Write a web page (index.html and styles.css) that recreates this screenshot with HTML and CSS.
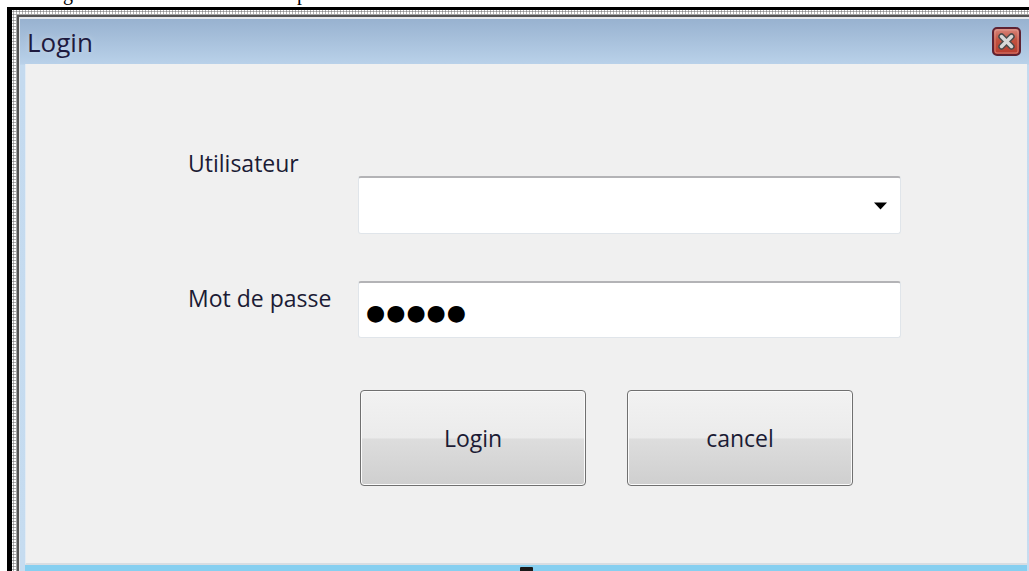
FILE: index.html
```html
<!DOCTYPE html>
<html lang="fr">
<head>
<meta charset="utf-8">
<title>Login</title>
<link rel="stylesheet" href="styles.css">
</head>
<body>
  <div class="caption"><span class="cap-g">g</span><span class="cap-p">p</span></div>
  <div class="frame">
    <div class="dots">
      <div class="win-outer">
        <div class="win-mid">
          <div class="win-edge">
            <div class="window">
              <div class="titlebar">
                <span class="title">Login</span>
                <svg class="close" width="29" height="29" viewBox="0 0 29 29" aria-label="Fermer">
                  <defs>
                    <linearGradient id="closeFill" x1="0" y1="0" x2="0" y2="1">
                      <stop offset="0" stop-color="#d98a80"/>
                      <stop offset="0.45" stop-color="#c2513f"/>
                      <stop offset="1" stop-color="#b73a2c"/>
                    </linearGradient>
                  </defs>
                  <rect x="1" y="1" width="27" height="27" rx="4" fill="url(#closeFill)" stroke="#5e2232" stroke-width="2"/>
                  <rect x="3" y="3" width="23" height="23" rx="2" fill="none" stroke="#e7a69c" stroke-width="1" opacity="0.6"/>
                  <path d="M9.5 9.5 L19.5 19.5 M19.5 9.5 L9.5 19.5" stroke="#4c4c4c" stroke-width="6.5" stroke-linecap="round"/>
                  <path d="M9.5 9.5 L19.5 19.5 M19.5 9.5 L9.5 19.5" stroke="#d8d8d8" stroke-width="3.5" stroke-linecap="round"/>
                </svg>
              </div>
              <div class="client">
                <form class="login-form">
                  <label class="lbl lbl-user">Utilisateur</label>
                  <div class="combo">
                    <svg class="combo-arrow" width="13" height="8" viewBox="0 0 13 8"><path d="M0 0.5 H13 L6.5 7.5 Z" fill="#000"/></svg>
                  </div>
                  <div class="pass-row">
                    <label class="lbl lbl-pass">Mot de passe</label>
                    <div class="field"><span class="mask">●●●●●</span></div>
                  </div>
                  <div class="buttons">
                    <button type="button" class="btn">Login</button>
                    <button type="button" class="btn">cancel</button>
                  </div>
                </form>
              </div>
            </div>
          </div>
        </div>
      </div>
    </div>
  </div>
  <div class="cursor-tip"></div>
</body>
</html>
```

FILE: styles.css
```css
html, body {
  margin: 0;
  padding: 0;
}

body {
  width: 1029px;
  height: 571px;
  overflow: hidden;
  background: #ffffff;
  position: relative;
  font-family: "Open Sans", "Noto Sans", sans-serif;
}

/* line of document text cut off above the window */
.caption {
  height: 7px;
  overflow: hidden;
  display: flex;
  align-items: flex-start;
  font-family: "Liberation Serif", serif;
  font-size: 20px;
  line-height: 20px;
  color: #000;
  white-space: nowrap;
}

.caption span {
  display: block;
  margin-top: -17px;
}

.cap-g { margin-left: 63px; }
.cap-p { margin-left: 224px; }

/* black selection frame around the screenshot */
.frame {
  margin-left: 7px;
  border-left: 5px solid #000;
  border-top: 3px solid #000;
}

.dots {
  padding: 4px 0 0 4px;
  background-color: #fff;
  background-image: radial-gradient(circle, #8d8d8d 0.9px, transparent 1.2px);
  background-size: 3px 3px;
  background-position: 0 0;
}

.win-outer {
  border-top: 1px solid #a3a3a3;
  border-left: 1px solid #a3a3a3;
}

.win-mid {
  border-top: 2px solid #555;
  border-left: 2px solid #555;
}

.win-edge {
  border-top: 2px solid #e4e8ec;
  border-left: 1px solid #e4e8ec;
}

/* window chrome */
.window {
  width: 1015px;
  padding: 0 8px 10px 5px;
  box-sizing: border-box;
  background: linear-gradient(to bottom, #98b2d0 0, #b9d1e9 45px, #c4daef 46px, #c6dcf0 100%);
}

.titlebar {
  height: 45px;
  display: flex;
  align-items: center;
  margin: 0 -8px 0 -5px;
  padding: 0 14px 0 7px;
}

.title {
  font-size: 26px;
  line-height: 30px;
  color: #1e1a3e;
  margin-top: 1px;
  text-shadow: 0 0 6px rgba(255, 255, 255, 0.35);
}

.close {
  margin-left: auto;
  display: block;
}

.client {
  height: 501px;
  box-sizing: border-box;
  background: #f0f0f0;
  border-left: 1px solid #e2ebf4;
  border-bottom: 2px solid #d8dde2;
  box-shadow: 0 8px 0 #86cff0;
}

.login-form {
  padding-top: 87px;
  display: flex;
  flex-direction: column;
}

.lbl {
  font-size: 23px;
  line-height: 25px;
  color: #1b1b35;
}

.lbl-user {
  margin-left: 162px;
}

.combo {
  margin-left: 332px;
  width: 543px;
  height: 58px;
  box-sizing: border-box;
  background: #fff;
  border: 1px solid #e0e5ea;
  border-top: 2px solid #b3b3b6;
  border-radius: 3px;
  display: flex;
  align-items: center;
  justify-content: flex-end;
  padding-right: 13px;
}

.combo-arrow {
  display: block;
}

.pass-row {
  display: flex;
  align-items: flex-start;
  margin-top: 47px;
  margin-left: 162px;
}

.lbl-pass {
  flex: 0 0 170px;
  margin-top: 5px;
}

.field {
  width: 543px;
  height: 57px;
  box-sizing: border-box;
  background: #fff;
  border: 1px solid #e0e5ea;
  border-top: 2px solid #b3b3b6;
  border-radius: 3px;
  display: flex;
  align-items: center;
  padding-left: 7px;
}

.mask {
  font-family: "DejaVu Sans", sans-serif;
  font-size: 22px;
  line-height: 22px;
  letter-spacing: 1px;
  color: #000;
  margin-top: 5px;
}

.buttons {
  display: flex;
  gap: 41px;
  margin-top: 52px;
  margin-left: 334px;
}

.btn {
  width: 226px;
  height: 96px;
  box-sizing: border-box;
  border: 1px solid #707070;
  border-radius: 4px;
  background: linear-gradient(to bottom, #f2f2f2 0, #ebebeb 50%, #dddddd 51%, #cfcfcf 100%);
  box-shadow: inset 0 0 0 1px #fbfbfb;
  font-family: "Open Sans", "Noto Sans", sans-serif;
  font-size: 23px;
  color: #1b1b35;
  padding: 0;
}

/* tip of the mouse pointer at the bottom edge */
.cursor-tip {
  position: absolute;
  left: 520px;
  top: 567px;
  width: 13px;
  height: 4px;
  background: #1a1a1a;
  border-radius: 1px 1px 0 0;
}
```
